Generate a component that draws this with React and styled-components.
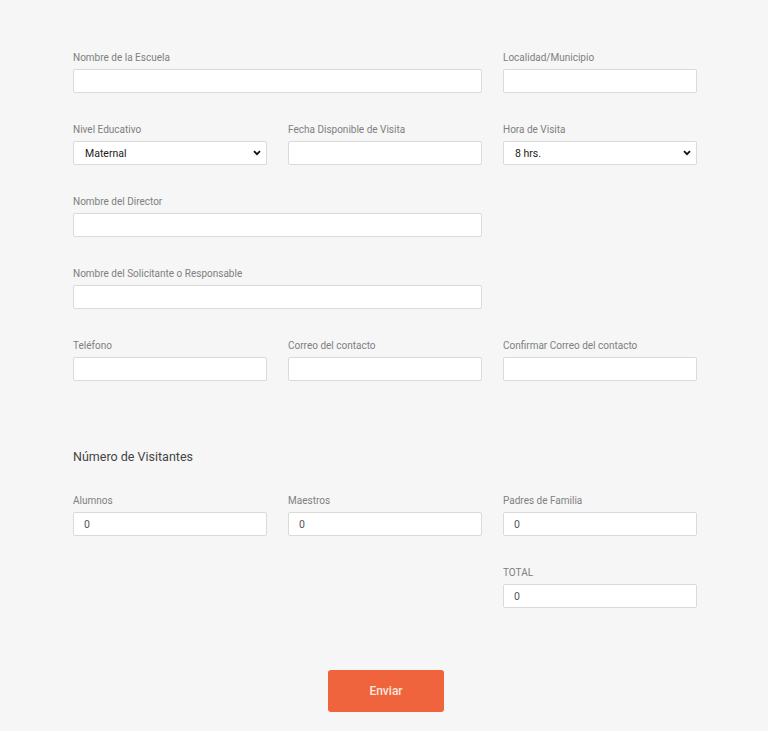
import React from "react";
import styled, { createGlobalStyle } from "styled-components";

const Global = createGlobalStyle`
  html, body { margin: 0; padding: 0; background: #f6f6f6; }
  body { font-family: Roboto, "Liberation Sans", Arial, sans-serif; }
  * { box-sizing: border-box; }
`;

const Page = styled.div`
  min-height: 731px;
  padding: 50px 71px 0 73px;
`;

const Grid = styled.div`
  display: grid;
  grid-template-columns: repeat(3, 194px);
  column-gap: 21px;
  row-gap: 29px;
`;

const Field = styled.div`
  display: flex;
  flex-direction: column;
  grid-column: ${(p) => p.$col || "auto"} / span ${(p) => p.$span || 1};
`;

const Label = styled.label`
  font-size: 10px;
  line-height: 15px;
  height: 15px;
  color: #808080;
  margin-bottom: 4px;
  white-space: nowrap;
`;

const Input = styled.input`
  height: 24px;
  width: 100%;
  border: 1px solid #dadada;
  border-radius: 2px;
  background: #fff;
  padding: 0 10px;
  font-family: Roboto, "Liberation Sans", Arial, sans-serif;
  font-size: 10.5px;
  color: #555;
  outline: none;
`;

const SelectWrap = styled.div`
  position: relative;
  height: 24px;
`;

const Select = styled.select`
  appearance: none;
  -webkit-appearance: none;
  height: 24px;
  width: 100%;
  border: 1px solid #dadada;
  border-radius: 2px;
  background: #fff;
  padding: 0 24px 0 11px;
  font-family: Roboto, "Liberation Sans", Arial, sans-serif;
  font-size: 10.5px;
  color: #222;
  outline: none;
`;

const Chevron = styled.svg`
  position: absolute;
  right: 6px;
  top: 9px;
  pointer-events: none;
`;

const Heading = styled.h3`
  margin: 67px 0 28px;
  font-size: 12.5px;
  line-height: 17px;
  font-weight: 400;
  color: #444;
`;

const Actions = styled.div`
  display: flex;
  justify-content: center;
  margin-top: 62px;
`;

const Button = styled.button`
  width: 116px;
  height: 42px;
  border: none;
  border-radius: 3px;
  background: #f0643d;
  color: #fbe7df;
  font-family: Roboto, "Liberation Sans", Arial, sans-serif;
  font-size: 12px;
  font-weight: 500;
  cursor: pointer;
  margin-left: 2px;
`;

function SelectField({ label, options, col, span }) {
  return (
    <Field $col={col} $span={span}>
      <Label>{label}</Label>
      <SelectWrap>
        <Select defaultValue={options[0]}>
          {options.map((o) => (
            <option key={o}>{o}</option>
          ))}
        </Select>
        <Chevron width="8" height="6" viewBox="0 0 8 6">
          <path d="M1 1.2 L4 4.2 L7 1.2" fill="none" stroke="#111" strokeWidth="1.8" />
        </Chevron>
      </SelectWrap>
    </Field>
  );
}

function TextField({ label, value, col, span }) {
  return (
    <Field $col={col} $span={span}>
      <Label>{label}</Label>
      <Input defaultValue={value} />
    </Field>
  );
}

export default function App() {
  return (
    <>
      <Global />
      <Page>
        <Grid>
          <TextField label="Nombre de la Escuela" span={2} />
          <TextField label="Localidad/Municipio" />
          <SelectField label="Nivel Educativo" options={["Maternal", "Preescolar", "Primaria", "Secundaria"]} />
          <TextField label="Fecha Disponible de Visita" />
          <SelectField label="Hora de Visita" options={["8 hrs.", "9 hrs.", "10 hrs.", "11 hrs."]} />
          <TextField label="Nombre del Director" col={1} span={2} />
          <TextField label="Nombre del Solicitante o Responsable" col={1} span={2} />
          <TextField label="Teléfono" col={1} />
          <TextField label="Correo del contacto" />
          <TextField label="Confirmar Correo del contacto" />
        </Grid>
        <Heading>Número de Visitantes</Heading>
        <Grid>
          <TextField label="Alumnos" value="0" />
          <TextField label="Maestros" value="0" />
          <TextField label="Padres de Familia" value="0" />
          <TextField label="TOTAL" value="0" col={3} />
        </Grid>
        <Actions>
          <Button type="button">Enviar</Button>
        </Actions>
      </Page>
    </>
  );
}
